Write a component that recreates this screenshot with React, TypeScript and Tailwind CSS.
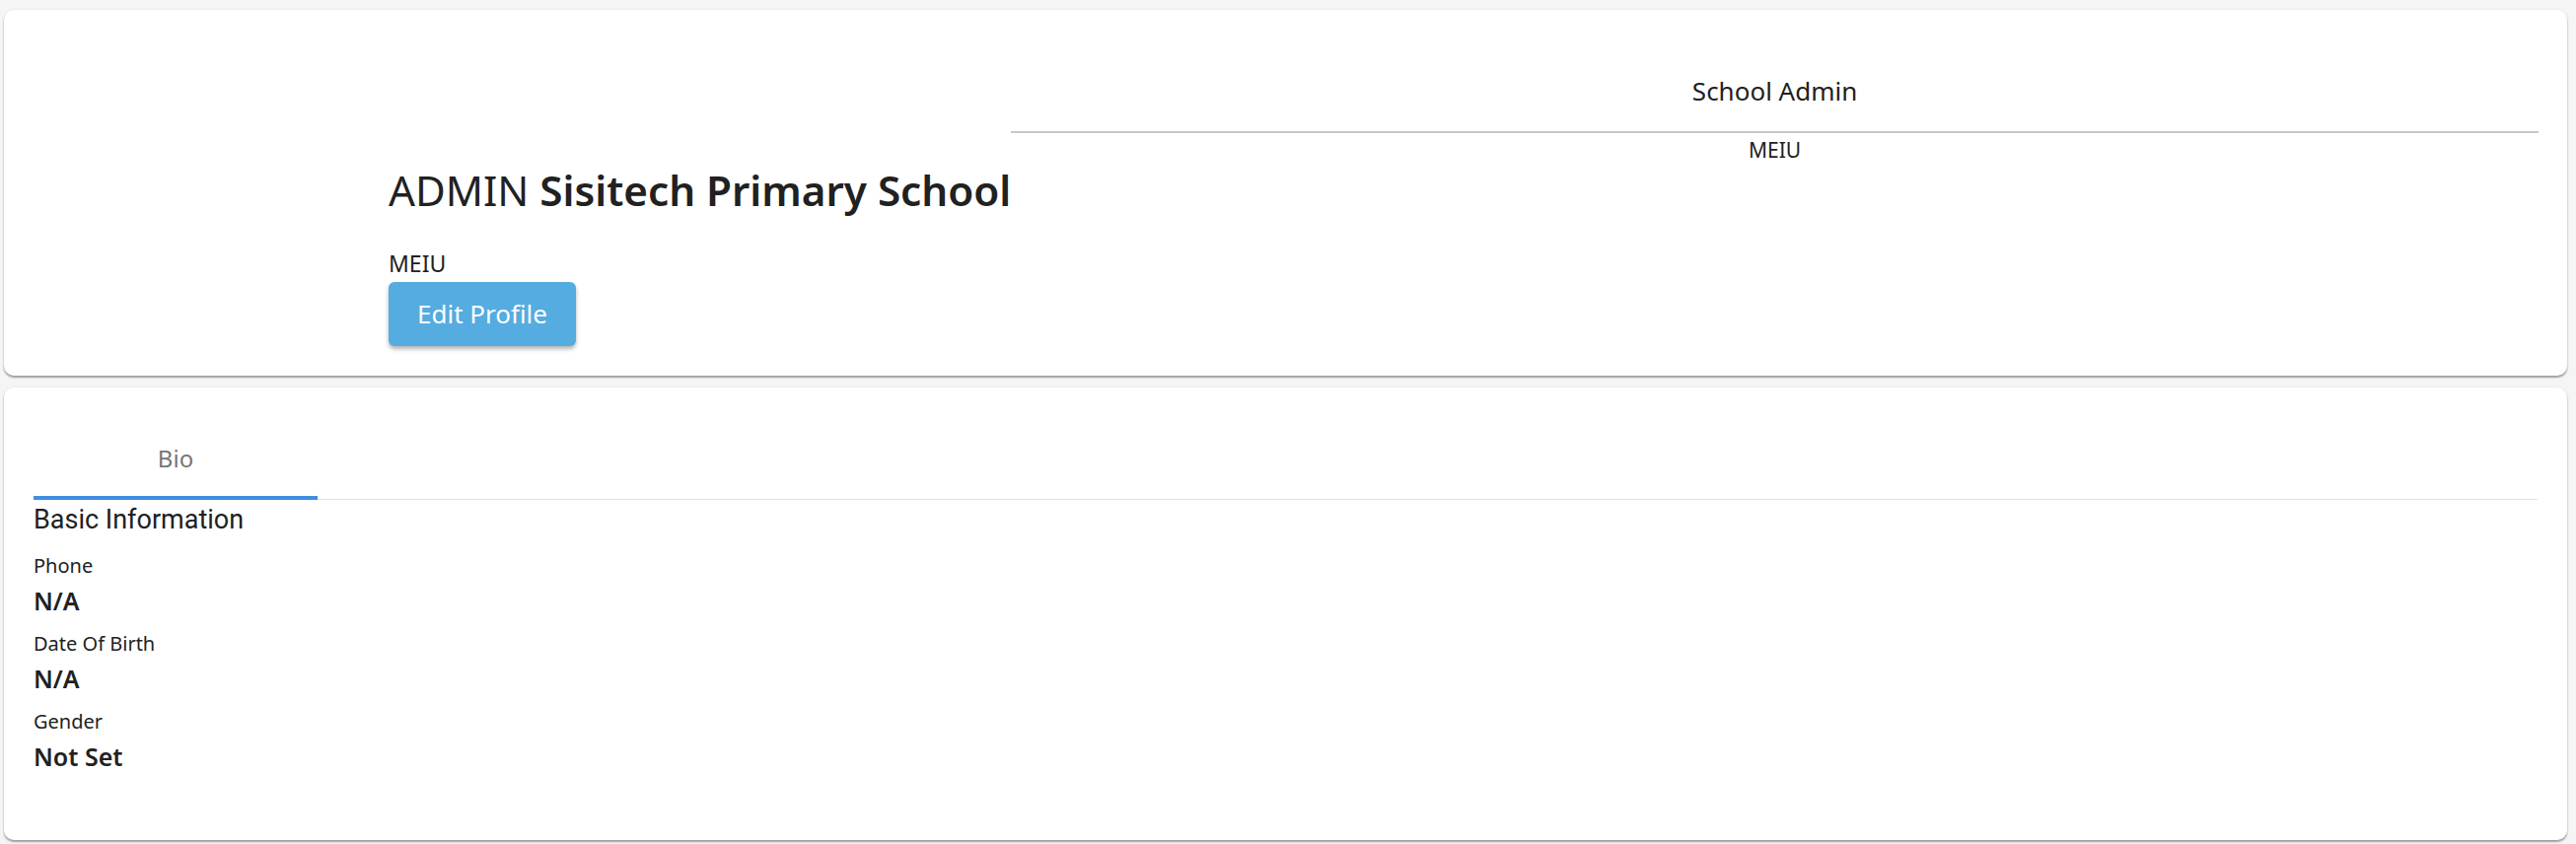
import React from "react";

const F = "font-['Noto_Sans',sans-serif]";

export default function App() {
  return (
    <div className={`min-h-[856px] w-full bg-[#f5f5f5] pl-[4px] pr-[9px] pt-[10px] pb-[5px] text-[#212121] ${F}`}>
      {/* Header card */}
      <div className="flex h-[371px] rounded-[10px] bg-white shadow-[0_2px_2px_rgba(0,0,0,0.35),0_0_3px_rgba(0,0,0,0.08)]">
        <div className="flex flex-col pl-[390px] pt-[158px]">
          <h1 className="whitespace-nowrap text-[42.2px] leading-[50px] font-normal">
            ADMIN <span className="font-semibold">Sisitech Primary School</span>
          </h1>
          <div className="mt-[33px] text-[23px] leading-[33px]">MEIU</div>
          <button className="mt-[2px] flex h-[65px] w-[190px] items-center justify-center rounded-[6px] bg-[#54ace0] text-[26px] text-white shadow-[0_3px_4px_rgba(0,0,0,0.3)]">
            Edit Profile
          </button>
        </div>
        <div className="mr-[29px] flex flex-1 flex-col items-center pt-[63px]">
          <div className="text-[26px] leading-[38px]">School Admin</div>
          <div className="mt-[22px] h-[2px] w-full bg-[#c8c8c8]" />
          <div className="mt-[2px] text-[21px] leading-[30px]">MEIU</div>
        </div>
      </div>

      {/* Bio card */}
      <div className="mt-[12px] h-[459px] rounded-[10px] bg-white px-[30px] pt-[30px] shadow-[0_2px_2px_rgba(0,0,0,0.35),0_0_3px_rgba(0,0,0,0.08)]">
        <div className="relative flex h-[84px] border-b border-[#e0e0e0]">
          <div className="flex h-full w-[288px] items-center justify-center text-[24px] text-[#757575]">Bio</div>
          <div className="absolute bottom-[-1px] left-0 h-[4px] w-[288px] bg-[#3f8ee0]" />
        </div>
        <div className="font-['Roboto',sans-serif] text-[27px] leading-[40px]">Basic Information</div>
        <div className="mt-[7px] flex flex-col">
          {[
            ["Phone", "N/A"],
            ["Date Of Birth", "N/A"],
            ["Gender", "Not Set"],
          ].map(([k, v]) => (
            <div key={k} className="mb-[7px]">
              <div className="text-[20px] leading-[39px]">{k}</div>
              <div className="text-[25px] leading-[33px] font-semibold">{v}</div>
            </div>
          ))}
        </div>
      </div>
    </div>
  );
}
